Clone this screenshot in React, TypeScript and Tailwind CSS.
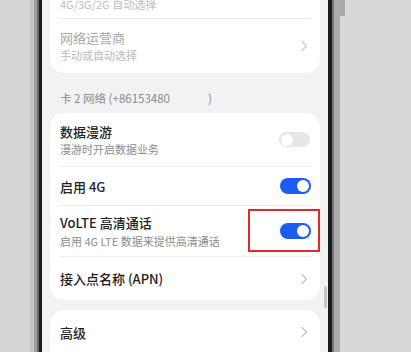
import React from "react";

const font = { fontFamily: '"Noto Sans CJK SC", "Noto Sans", sans-serif' };

function Chevron({ faded }: { faded?: boolean }) {
  return (
    <svg width="8" height="12" viewBox="0 0 8 12" className="shrink-0">
      <path d="M2 1.5 L6.5 6 L2 10.5" fill="none" stroke={faded ? "#d0d0d0" : "#c4c4c4"} strokeWidth="1.4" strokeLinecap="round" strokeLinejoin="round" />
    </svg>
  );
}

function Toggle({ on }: { on: boolean }) {
  return (
    <div className={on ? "w-[31px] h-[16px] rounded-full bg-[#1b5df2] flex items-center justify-end pr-[2px] shrink-0" : "w-[31px] h-[15px] rounded-full bg-[#e6e6e6] flex items-center justify-start pl-[2px] shrink-0"}>
      <div className="w-[12px] h-[12px] rounded-full bg-white" />
    </div>
  );
}

function Divider() {
  return <div className="ml-[10px] mr-[9px] h-px bg-[#ececec]" />;
}

export default function App() {
  return (
    <div className="w-[411px] h-[352px] overflow-hidden flex bg-[#d6d6d6]" style={font}>
      <div className="w-[30px] bg-[#d4d4d4]" />
      <div className="w-[4px] bg-[#c2c2c2]" />
      <div className="w-[3px] bg-[#9e9e9e]" />
      <div className="w-[2px] bg-[#6a6a6a]" />
      <div className="w-[3px] bg-[#1c1c1c]" />
      <div className="relative w-[286px] h-full bg-[#f1f2f4] overflow-hidden px-[8px]">
        <div className="mt-[-36px] bg-white rounded-[14px]">
          <div className="h-[54px] flex flex-col justify-end pb-[6px] pl-[10px] pr-[12px]">
            <div className="text-[11px] leading-[16px] text-[#bdbdbd]">4G/3G/2G 自动选择</div>
          </div>
          <Divider />
          <div className="h-[54px] flex items-center justify-between pl-[10px] pr-[12px]">
            <div className="flex flex-col">
              <div className="text-[13px] leading-[17px] text-[#a9a9a9]">网络运营商</div>
              <div className="text-[11px] leading-[16px] text-[#bababa] mt-[1px]">手动或自动选择</div>
            </div>
            <Chevron faded />
          </div>
        </div>
        <div className="h-[40px] flex items-end pb-[7px] pl-[10px] text-[11.5px] leading-[16px] text-[#8a8a8a]">
          卡 2 网络 (+86153480<span className="inline-block w-[38px]" />)
        </div>
        <div className="bg-white rounded-[14px]">
          <div className="h-[53px] flex items-center justify-between pl-[10px] pr-[10px]">
            <div className="flex flex-col">
              <div className="text-[13px] leading-[17px] font-medium text-[#222]">数据漫游</div>
              <div className="text-[11px] leading-[16px] text-[#8c8c8c] mt-[1px]">漫游时开启数据业务</div>
            </div>
            <Toggle on={false} />
          </div>
          <Divider />
          <div className="h-[38px] flex items-center justify-between pl-[10px] pr-[9px]">
            <div className="text-[13px] leading-[17px] font-medium text-[#222]">启用 4G</div>
            <Toggle on />
          </div>
          <Divider />
          <div className="relative h-[50px] flex items-center justify-between pl-[10px] pr-[9px]">
            <div className="flex flex-col">
              <div className="text-[13px] leading-[17px] font-medium text-[#222]">VoLTE 高清通话</div>
              <div className="text-[11px] leading-[16px] text-[#8c8c8c] mt-[2px]">启用 4G LTE 数据来提供高清通话</div>
            </div>
            <Toggle on />
            <div className="absolute right-[0px] top-[3px] w-[72px] h-[43px] border-2 border-[#dd2a2a]" />
          </div>
          <Divider />
          <div className="h-[43px] flex items-center justify-between pl-[10px] pr-[12px]">
            <div className="text-[13px] leading-[17px] font-medium text-[#222]">接入点名称 (APN)</div>
            <Chevron />
          </div>
        </div>
        <div className="mt-[10px] bg-white rounded-[14px]">
          <div className="h-[44px] flex items-center justify-between pl-[10px] pr-[12px]">
            <div className="text-[13px] leading-[17px] font-medium text-[#222]">高级</div>
            <Chevron />
          </div>
          <div className="h-[20px]" />
        </div>
        <div className="absolute left-[282px] top-[286px] w-[3px] h-[22px] rounded-full bg-[#c6c6c6]" />
      </div>
      <div className="w-[4px] bg-[#1c1c1c]" />
      <div className="w-[2px] bg-[#777]" />
      <div className="w-[6px] bg-[#ababab]" />
      <div className="relative flex-1 bg-[#d8d8d8]">
        <div className="absolute left-[0px] top-[0px] w-[5px] h-[16px] bg-[#a8a8a8]" />
      </div>
    </div>
  );
}
